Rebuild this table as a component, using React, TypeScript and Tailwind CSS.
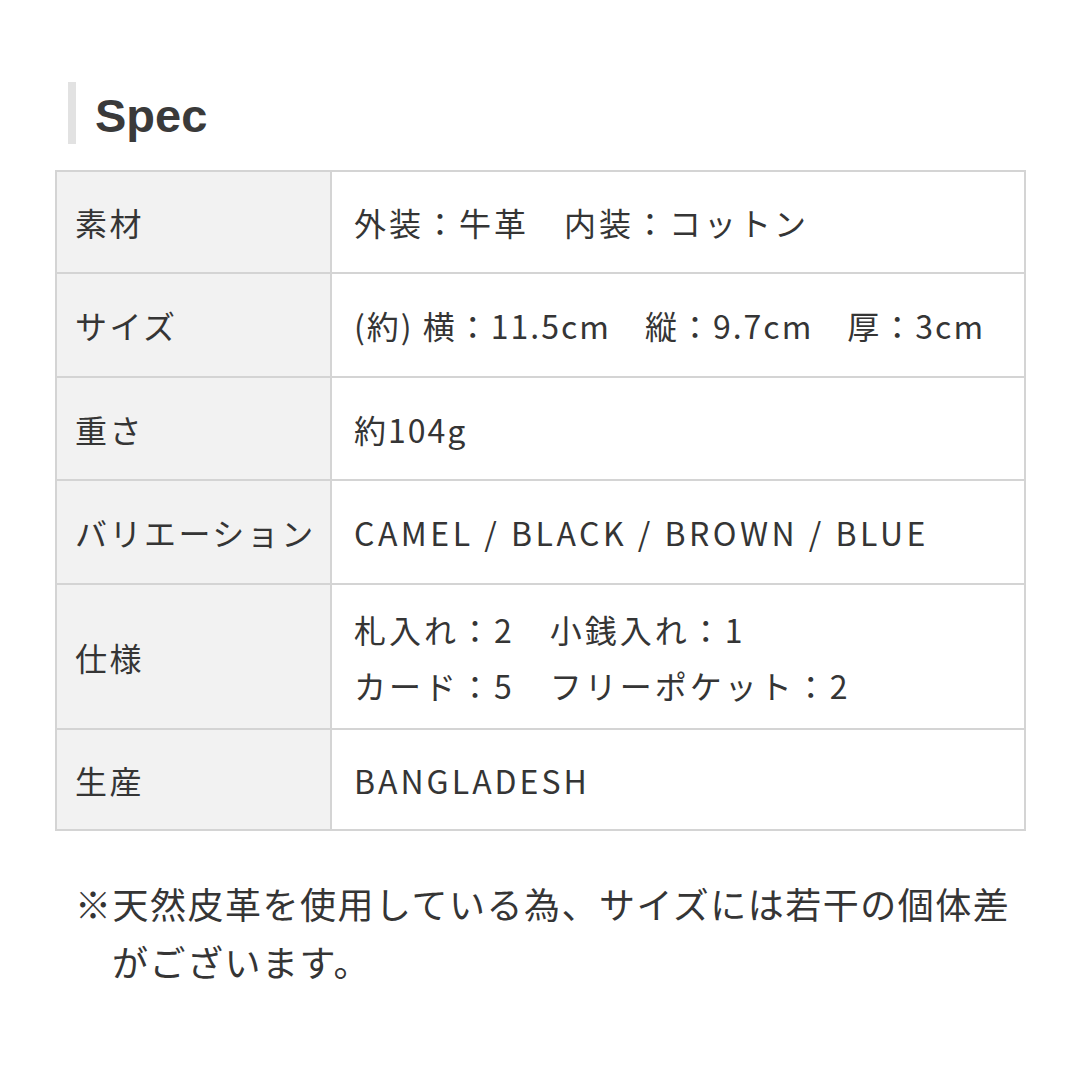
import React from "react";

const rows: { label: string; value: React.ReactNode; h: string; track: string }[] = [
  { label: "素材", value: "外装：牛革　内装：コットン", h: "h-[100px]", track: "tracking-[3px]" },
  {
    label: "サイズ",
    value: "(約) 横：11.5cm　縦：9.7cm　厚：3cm",
    h: "h-[104px]",
    track: "tracking-[2px]",
  },
  { label: "重さ", value: "約104g", h: "h-[103px]", track: "tracking-[2px]" },
  {
    label: "バリエーション",
    value: "CAMEL / BLACK / BROWN / BLUE",
    h: "h-[104px]",
    track: "tracking-[3.5px]",
  },
  {
    label: "仕様",
    value: (
      <>
        <div>札入れ：2　小銭入れ：1</div>
        <div>カード：5　フリーポケット：2</div>
      </>
    ),
    h: "h-[145px]",
    track: "tracking-[3px]",
  },
  { label: "生産", value: "BANGLADESH", h: "h-[101px]", track: "tracking-[3px]" },
];

const App = () => {
  return (
    <div
      className="w-[1080px] h-[1080px] bg-white text-[#353535]"
      style={{ fontFamily: '"Noto Sans CJK JP", "Noto Sans", sans-serif' }}
    >
      {/* heading */}
      <div className="pt-[82px] pl-[68px] flex items-center h-[144px]">
        <div className="w-[8px] h-[62px] bg-[#e2e2e2]" />
        <h2
          className="ml-[19px] mt-[4px] text-[47px] font-bold text-[#3a3a3a] leading-none"
          style={{ fontFamily: '"Liberation Sans", Arial, sans-serif' }}
        >
          Spec
        </h2>
      </div>

      {/* table */}
      <div className="mt-[26px] ml-[55px] w-[971px] border-2 border-[#d4d4d4]">
        {rows.map((r, i) => (
          <div
            key={i}
            className={`flex ${r.h} ${i > 0 ? "border-t-2 border-[#d4d4d4]" : ""}`}
          >
            <div className="w-[275px] shrink-0 bg-[#f2f2f2] border-r-2 border-[#d4d4d4] flex items-center pl-[18px] text-[32px] tracking-[2.5px]">
              {r.label}
            </div>
            <div
              className={`flex-1 flex flex-col justify-center pl-[22px] text-[32px] leading-[56px] ${r.track}`}
            >
              {r.value}
            </div>
          </div>
        ))}
      </div>

      {/* note */}
      <div className="mt-[43px] ml-[75px] w-[980px] text-[36px] tracking-[1.5px] leading-[58px] text-[#353535]">
        <div>※天然皮革を使用している為、サイズには若干の個体差</div>
        <div className="pl-[37px]">がございます。</div>
      </div>
    </div>
  );
};

export default App;
